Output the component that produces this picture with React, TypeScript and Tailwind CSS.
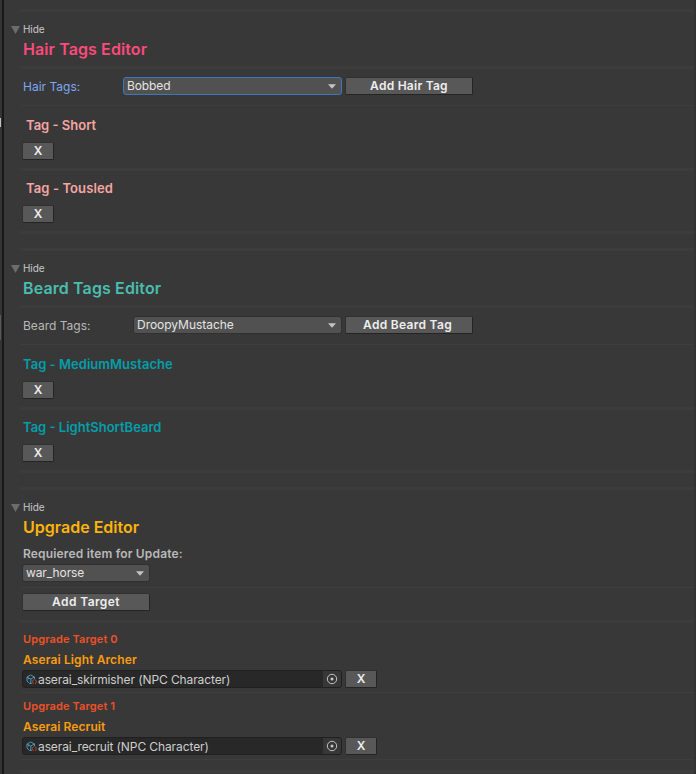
import React from 'react';

function Divider({ thin = false }: { thin?: boolean }) {
  return <div className={`ml-4 shrink-0 ${thin ? 'h-px bg-[#3e3e3e]' : 'h-[3px] bg-[#3c3c3c]'}`} />;
}

function Button({ label, className }: { label: string; className: string }) {
  return (
    <button
      className={`flex h-[18px] items-center justify-center rounded-[2px] border border-[#303030] border-b-[#242424] border-r-[#242424] bg-[#585858] pb-px font-semibold whitespace-nowrap text-[#eeeeee] ${className}`}
    >
      {label}
    </button>
  );
}

function Select({ value, className, textClass }: { value: string; className: string; textClass: string }) {
  return (
    <div className={`flex h-[18px] items-center justify-between rounded-[3px] border bg-[#515151] pr-[5px] pl-[3px] text-[12px] text-[#e4e4e4] ${className}`}>
      <span className={`-mt-px whitespace-nowrap ${textClass}`}>{value}</span>
      <svg width="8" height="5" viewBox="0 0 8 5">
        <path d="M0 .3h8L4 4.7z" fill="#c4c4c4" />
      </svg>
    </div>
  );
}

function SectionHeader({ title, className }: { title: string; className: string }) {
  return (
    <>
      <div className="mt-[9px] flex h-[18px] items-center pl-[7px] text-[10px] text-[#c8c8c8]">
        <svg width="9" height="8" viewBox="0 0 9 8" className="mr-[3px]">
          <path d="M0 0h9L4.5 8z" fill="#6c6c6c" />
        </svg>
        <span className="-mt-px tracking-[-0.1px]">Hide</span>
      </div>
      <h2 className={`h-[21px] pl-[19px] text-[16px] leading-[21px] font-semibold whitespace-nowrap ${className}`}>{title}</h2>
    </>
  );
}

function Tag({ name, className }: { name: string; className: string }) {
  return (
    <>
      <div className={`h-5 text-[13px] leading-[19px] font-semibold whitespace-nowrap ${className}`}>{name}</div>
      <Button label="X" className="mt-[6px] mb-2 ml-[18px] w-[32px] text-[12px]" />
      <Divider />
    </>
  );
}

function ObjectIcon() {
  return (
    <svg width="11" height="11" viewBox="0 0 11 11" fill="none">
      <path d="M5.8 9.5H3.7L1 7V3L4.7 1l3.8 2v2.3M1 3l3.8 2 3.7-2M4.8 5v4.5M2.6 3.8v1.5" stroke="#4f96b4" strokeWidth="1" />
      <path d="M7.6 5.8c-1.2.3-.4 1.5-1.3 2 .9.5.1 1.7 1.3 2M9.2 5.8c1.2.3.4 1.5 1.3 2-.9.5-.1 1.7-1.3 2" stroke="#cc4c30" strokeWidth="1" />
    </svg>
  );
}

function Target({ label, name, value, valueClass, nameClass }: { label: string; name: string; value: string; valueClass: string; nameClass: string }) {
  return (
    <div>
      <div className="h-5 pl-[19px] text-[11px] leading-5 font-semibold tracking-[0.12px] text-[#ee5127]">{label}</div>
      <div className={`h-[21px] pl-[19px] text-[12px] leading-[21px] font-semibold text-[#fb9c0c] ${nameClass}`}>{name}</div>
      <div className="flex pl-[18px]">
        <div className="flex h-[18px] w-[320px] items-center overflow-hidden rounded-[3px] border border-[#202020] bg-[#282828] pl-[3px] text-[12px] text-[#cecece]">
          <ObjectIcon />
          <span className={`mt-px ml-px whitespace-nowrap ${valueClass}`}>{value}</span>
          <div className="ml-auto flex h-full w-[18px] items-center justify-center bg-[#373737]">
            <svg width="12" height="12" viewBox="0 0 12 12">
              <circle cx="6" cy="6" r="4.7" fill="none" stroke="#c2c2c2" />
              <circle cx="6" cy="6" r="1.5" fill="#c8c8c8" />
            </svg>
          </div>
        </div>
        <Button label="X" className="ml-[3px] w-[32px] text-[12px]" />
      </div>
    </div>
  );
}

export default function App() {
  return (
    <div className="flex h-[774px] w-[696px] overflow-hidden bg-[#383838] font-['Inter',sans-serif]">
      <aside className="flex w-1 shrink-0 flex-col border-r-2 border-[#191919] bg-[#343434]">
        <div className="mt-[118px] h-[9px] w-px bg-[#c0c0c0]" />
        <div className="mt-[188px] h-[25px] w-px bg-[#585858]" />
      </aside>
      <main className="flex min-w-0 flex-1 flex-col border-r-2 border-[#333333] pt-[9px]">
        <section className="h-[239px]">
          <Divider />
          <SectionHeader title="Hair Tags Editor" className="tracking-[0.1px] text-[#fc4a7c]" />
          <div className="h-[6px]" />
          <Divider />
          <div className="mt-2 mb-[9px] flex h-[19px] pl-[19px]">
            <span className="w-[100px] text-[12px] leading-5 text-[#7ba7f5]">Hair Tags:</span>
            <Select value="Bobbed" className="w-[219px] border-[#3a79bb]" textClass="tracking-[-0.1px]" />
            <Button label="Add Hair Tag" className="ml-[3px] w-[128px] text-[12px] tracking-[0.25px]" />
          </div>
          <Divider thin />
          <div className="h-[10px]" />
          <Tag name="Tag - Short" className="pl-[22px] text-[#f5a6a4]" />
          <div className="h-2" />
          <Tag name="Tag - Tousled" className="pl-[22px] tracking-[0.1px] text-[#f5a6a4]" />
        </section>
        <section className="h-[239px]">
          <Divider />
          <SectionHeader title="Beard Tags Editor" className="tracking-[0.12px] text-[#4abdae]" />
          <div className="h-[6px]" />
          <Divider />
          <div className="mt-2 mb-[9px] flex h-[19px] pl-[19px]">
            <span className="w-[110px] text-[12px] leading-5 text-[#b8b8b8]">Beard Tags:</span>
            <Select value="DroopyMustache" className="w-[209px] border-[#303030]" textClass="tracking-[-0.03px]" />
            <Button label="Add Beard Tag" className="ml-[3px] w-[128px] pr-[3px] text-[12px] tracking-[0.3px]" />
          </div>
          <Divider thin />
          <div className="h-[10px]" />
          <Tag name="Tag - MediumMustache" className="pl-[19px] tracking-[0.03px] text-[#049eaa]" />
          <div className="h-2" />
          <Tag name="Tag - LightShortBeard" className="pl-[19px] text-[#049eaa]" />
        </section>
        <section>
          <Divider />
          <SectionHeader title="Upgrade Editor" className="text-[#fdb40a]" />
          <div className="mt-[7px] h-[19px] pl-[19px] text-[12px] leading-[18px] font-semibold tracking-[0.17px] text-[#b9b9b9]">Requiered item for Update:</div>
          <Select value="war_horse" className="mb-[5px] ml-[18px] w-[128px] border-[#303030]" textClass="tracking-[-0.1px]" />
          <Divider thin />
          <Button label="Add Target" className="mt-[5px] mb-[9px] ml-[18px] w-[128px] text-[12px] tracking-[0.4px]" />
          <Divider />
          <div className="h-[6px]" />
          <Target label="Upgrade Target 0" name="Aserai Light Archer" value="aserai_skirmisher (NPC Character)" valueClass="tracking-[-0.1px]" nameClass="tracking-[0.12px]" />
          <div className="h-1" />
          <Divider thin />
          <div className="h-[3px]" />
          <Target label="Upgrade Target 1" name="Aserai Recruit" value="aserai_recruit (NPC Character)" valueClass="tracking-[-0.1px]" nameClass="tracking-[0.08px]" />
          <div className="h-1" />
          <Divider thin />
          <div className="h-[10px]" />
          <Divider />
        </section>
      </main>
    </div>
  );
}
